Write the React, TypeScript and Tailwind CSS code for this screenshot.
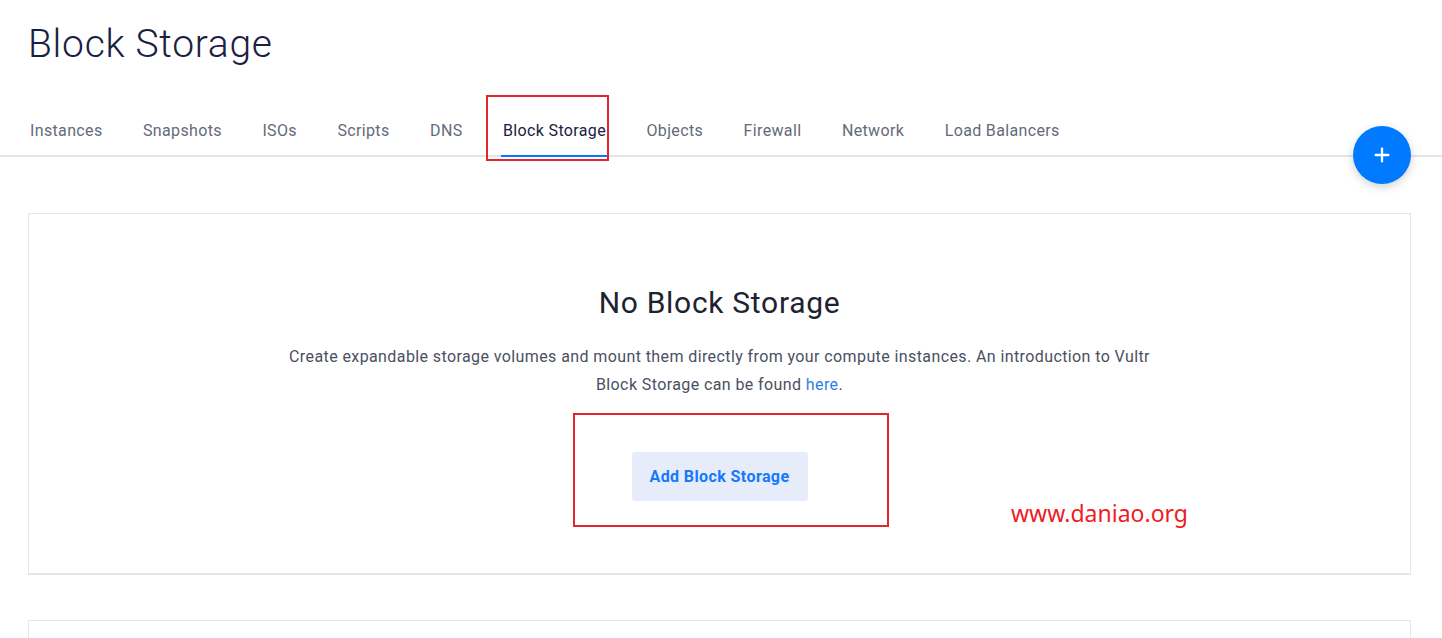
import { Plus } from "lucide-react"

const tabs = [
  "Instances",
  "Snapshots",
  "ISOs",
  "Scripts",
  "DNS",
  "Block Storage",
  "Objects",
  "Firewall",
  "Network",
  "Load Balancers",
]

export default function App() {
  return (
    <div
      className="relative min-h-[638px] w-[1442px] overflow-hidden bg-white"
      style={{ fontFamily: "Roboto, 'Liberation Sans', sans-serif" }}
    >
      <h1 className="pl-[28px] pt-[21px] text-[39px] font-light leading-[46px] tracking-[0.7px] text-[#1b2042]">
        Block Storage
      </h1>

      <div className="mt-[52px] flex gap-[40.5px] border-b-2 border-[#e4e4ea] pl-[30px]">
        {tabs.map((tab) => (
          <div
            key={tab}
            className={
              tab === "Block Storage"
                ? "-mb-[2px] -mx-[2px] border-b-2 border-[#007bfc] px-[2px] pb-[12px] text-[16px] leading-[24px] tracking-[0.35px] text-[#1b2042]"
                : "-mb-[2px] border-b-2 border-transparent pb-[12px] text-[16px] leading-[24px] tracking-[0.35px] text-[#646a7a]"
            }
          >
            {tab}
          </div>
        ))}
      </div>

      <div className="ml-[28px] mr-[31px] mt-[56px] flex flex-col items-center border border-[#e6e6eb] pb-[72px] pt-[71px] shadow-[0_1px_0_#e4e4ea]">
        <h2 className="text-[30px] leading-[36px] tracking-[0.7px] text-[#1d2331]">No Block Storage</h2>
        <p className="mt-[22px] max-w-[880px] text-center text-[16px] leading-[28px] tracking-[0.4px] text-[#4a5062]">
          Create expandable storage volumes and mount them directly from your compute instances. An introduction to Vultr
          Block Storage can be found <span className="text-[#2d7fe6]">here</span>.
        </p>
        <button className="mt-[53px] h-[49px] w-[176px] rounded-[3px] bg-[#e6ecfa] text-[16px] font-bold tracking-[0.4px] text-[#1479fb]">
          Add Block Storage
        </button>
      </div>

      <div className="ml-[28px] mr-[31px] mt-[46px] h-[40px] border border-[#e6e6eb]" />

      {/* floating action button */}
      <button className="absolute left-[1353px] top-[126px] flex h-[58px] w-[58px] items-center justify-center rounded-full bg-[#007bff] shadow-[0_3px_10px_rgba(0,0,0,0.18)]">
        <Plus className="h-[22px] w-[22px] text-white" strokeWidth={2.5} />
      </button>

      {/* annotation overlays */}
      <div className="pointer-events-none absolute left-[486px] top-[95px] h-[66px] w-[123px] border-2 border-[#e3262e]" />
      <div className="pointer-events-none absolute left-[573px] top-[413px] h-[114px] w-[316px] border-2 border-[#e3262e]" />
      <div
        className="absolute left-[1011px] top-[498px] text-[23px] leading-[30px] text-[#ee1c25]"
        style={{ fontFamily: "'Noto Sans', 'Open Sans', sans-serif" }}
      >
        www.daniao.org
      </div>
    </div>
  )
}
